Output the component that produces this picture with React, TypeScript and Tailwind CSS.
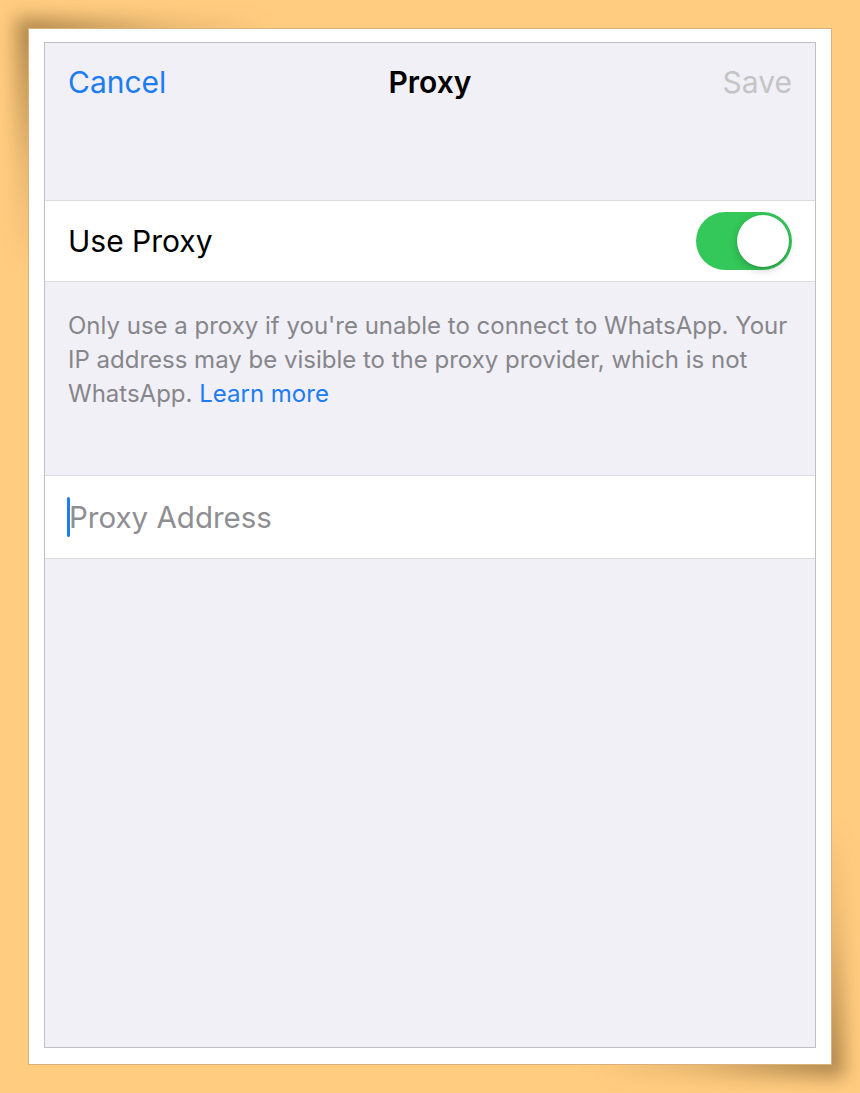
import React from "react";

const font = { fontFamily: "Inter, 'Liberation Sans', sans-serif" };

const Toggle = () => (
  <div className="relative w-[96px] h-[58px] rounded-full bg-[#34c759]">
    <div className="absolute right-[3px] top-[3px] w-[52px] h-[52px] rounded-full bg-white shadow-[0_3px_8px_rgba(0,0,0,0.2),0_1px_1px_rgba(0,0,0,0.12)]" />
  </div>
);

const ProxySettings = () => {
  return (
    <div className="flex flex-col h-full bg-[#f1f0f6] border border-[#bfbfc4]" style={font}>
      <div className="relative flex items-center justify-between h-[78px] px-[23px] text-[30px]">
        <span className="text-[#1b7cf4]">Cancel</span>
        <span className="absolute left-1/2 -translate-x-1/2 font-semibold text-black">Proxy</span>
        <span className="text-[#c4c4c7]">Save</span>
      </div>
      <div className="h-[79px]" />
      <div className="flex items-center justify-between h-[82px] px-[23px] bg-white border-y border-[#dcdce0]">
        <span className="text-[30px] text-black">Use Proxy</span>
        <Toggle />
      </div>
      <div className="h-[193px] px-[23px] pt-[27px] text-[24px] leading-[34px] text-[#86868b]">
        Only use a proxy if you're unable to connect to WhatsApp. Your IP address may be visible to the proxy provider, which is not WhatsApp.{" "}
        <span className="text-[#1b7cf4]">Learn more</span>
      </div>
      <div className="flex items-center h-[84px] px-[22px] bg-white border-y border-[#dcdce0]">
        <div className="w-[3px] h-[40px] rounded-full bg-[#1b7cf4]" />
        <span className="text-[29.5px] text-[#8e8e93] -ml-[1px]">Proxy Address</span>
      </div>
      <div className="flex-1" />
    </div>
  );
};

export default function App() {
  return (
    <div className="relative w-[860px] h-[1093px] bg-[#ffcc80] overflow-hidden pt-[28px] pl-[28px]">
      <div className="absolute left-[16px] top-[18px] w-[260px] h-[260px] bg-[radial-gradient(circle_at_top_left,rgba(100,70,25,0.55),rgba(100,70,25,0.15)_40%,transparent_70%)] blur-[9px]" />
      <div className="absolute left-[584px] top-[817px] w-[260px] h-[260px] bg-[radial-gradient(circle_at_bottom_right,rgba(100,70,25,0.55),rgba(100,70,25,0.15)_40%,transparent_70%)] blur-[9px]" />
      <div className="relative w-[804px] h-[1037px] bg-white border border-[#d9b27a] pt-[13px] pb-[16px] px-[15px]">
        <ProxySettings />
      </div>
    </div>
  );
}
